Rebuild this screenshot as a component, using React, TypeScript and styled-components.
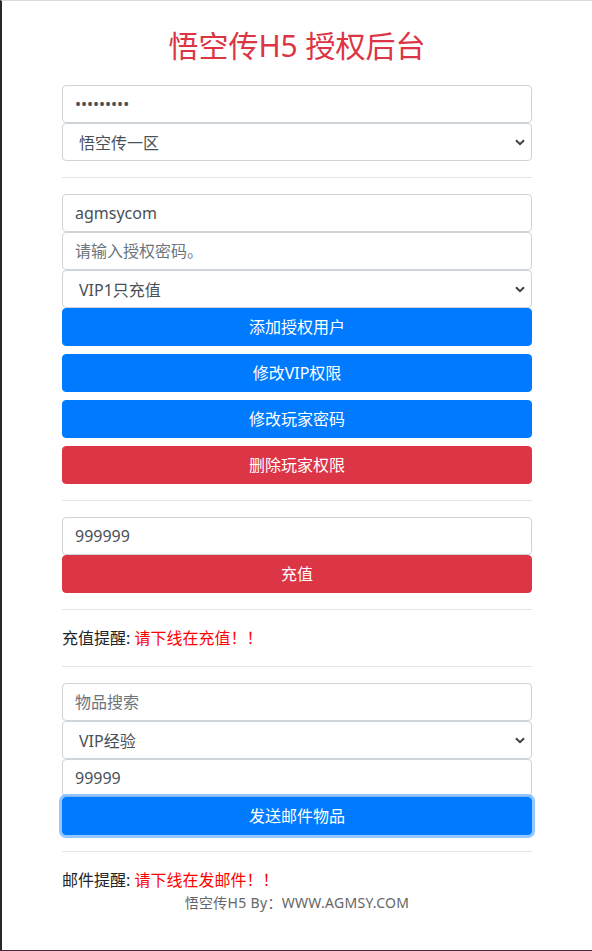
import React from 'react';
import styled, { createGlobalStyle } from 'styled-components';

const GlobalStyle = createGlobalStyle`
    html, body {
        margin: 0;
        padding: 0;
        background: #ffffff;
    }
    body {
        font-family: "Noto Sans", "Noto Sans CJK SC", sans-serif;
        font-size: 16px;
        line-height: 1.5;
        color: #212529;
    }
    * {
        box-sizing: border-box;
    }
`;

const Frame = styled.div`
    min-height: 951px;
    border-left: 2px solid #2b2730;
    border-top: 1px solid #dcdcdc;
    border-bottom: 1px solid #4a2a3a;
    background: #ffffff;
`;

const Container = styled.div`
    width: 470px;
    margin: 0 auto;
    display: flex;
    flex-direction: column;
`;

const Title = styled.h2`
    margin: 27px 0 21px;
    font-size: 30px;
    font-weight: 400;
    line-height: 36px;
    text-align: center;
    color: #dc3545;
    font-family: "Noto Sans", "Noto Sans CJK SC", sans-serif;
`;

const Input = styled.input`
    display: block;
    width: 100%;
    height: 38px;
    padding: 6px 12px;
    font-size: 16px;
    line-height: 24px;
    color: #495057;
    background: #ffffff;
    border: 1px solid #ced4da;
    border-radius: 4px;
    outline: none;
    font-family: "Noto Sans", "Noto Sans CJK SC", sans-serif;

    &::placeholder {
        color: #6c757d;
        opacity: 1;
    }
`;

const SelectBox = styled.select`
    display: block;
    width: 100%;
    height: 38px;
    padding: 7px 30px 5px 16px;
    font-size: 16px;
    line-height: 24px;
    color: #495057;
    border: 1px solid #ced4da;
    border-radius: 4px;
    outline: none;
    appearance: none;
    -webkit-appearance: none;
    font-family: "Noto Sans", "Noto Sans CJK SC", sans-serif;
    background: #ffffff url("data:image/svg+xml;utf8,<svg xmlns='http://www.w3.org/2000/svg' width='10' height='7' viewBox='0 0 10 7'><path d='M1 1.2 L5 5.2 L9 1.2' fill='none' stroke='%23404040' stroke-width='2'/></svg>") no-repeat right 6px center;
`;

const Button = styled.button<{ $variant: 'primary' | 'danger'; $focused?: boolean; $gap?: boolean }>`
    display: block;
    width: 100%;
    height: 38px;
    margin-bottom: ${p => (p.$gap ? '8px' : '0')};
    padding: 6px 12px;
    font-size: 16px;
    line-height: 24px;
    color: #ffffff;
    text-align: center;
    border: 1px solid ${p => (p.$variant === 'primary' ? '#007bff' : '#dc3545')};
    background: ${p => (p.$variant === 'primary' ? '#007bff' : '#dc3545')};
    border-radius: 4px;
    cursor: pointer;
    font-family: "Noto Sans", "Noto Sans CJK SC", sans-serif;
    box-shadow: ${p => (p.$focused ? '0 0 0 3px rgba(38, 143, 255, 0.5)' : 'none')};
    outline: none;
`;

const Divider = styled.hr`
    width: 100%;
    margin: 16px 0;
    border: 0;
    border-top: 1px solid rgba(0, 0, 0, 0.1);
`;

const Notice = styled.p`
    margin: 0;
    font-size: 16px;
    line-height: 24px;
    color: #212529;
`;

const Warn = styled.span`
    color: #ff0000;
`;

const Footer = styled.div`
    text-align: center;
    font-size: 14px;
    line-height: 21px;
    letter-spacing: 0.3px;
    color: #666666;
`;

export default function App() {
    return (
        <>
            <GlobalStyle />
            <Frame>
                <Container>
                    <Title>悟空传H5 授权后台</Title>

                    <Input type="password" defaultValue="123456789" readOnly />
                    <SelectBox defaultValue="1">
                        <option value="1">悟空传一区</option>
                        <option value="2">悟空传二区</option>
                    </SelectBox>

                    <Divider />

                    <Input type="text" defaultValue="agmsycom" />
                    <Input type="text" placeholder="请输入授权密码。" />
                    <SelectBox defaultValue="vip1">
                        <option value="vip1">VIP1只充值</option>
                        <option value="vip2">VIP2</option>
                    </SelectBox>
                    <Button $variant="primary" $gap>添加授权用户</Button>
                    <Button $variant="primary" $gap>修改VIP权限</Button>
                    <Button $variant="primary" $gap>修改玩家密码</Button>
                    <Button $variant="danger">删除玩家权限</Button>

                    <Divider />

                    <Input type="text" defaultValue="999999" />
                    <Button $variant="danger">充值</Button>

                    <Divider />

                    <Notice>
                        充值提醒: <Warn>请下线在充值！！</Warn>
                    </Notice>

                    <Divider />

                    <Input type="text" placeholder="物品搜索" />
                    <SelectBox defaultValue="vipexp">
                        <option value="vipexp">VIP经验</option>
                    </SelectBox>
                    <Input type="text" defaultValue="99999" />
                    <Button $variant="primary" $focused>发送邮件物品</Button>

                    <Divider />

                    <Notice>
                        邮件提醒: <Warn>请下线在发邮件！！</Warn>
                    </Notice>
                    <Footer>悟空传H5 By：WWW.AGMSY.COM</Footer>
                </Container>
            </Frame>
        </>
    );
}
